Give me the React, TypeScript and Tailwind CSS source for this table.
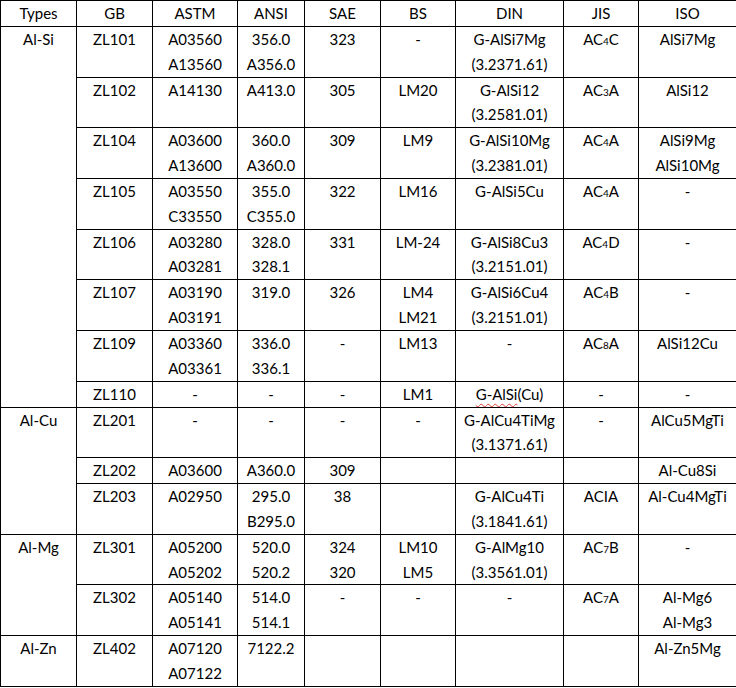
import type { ReactNode } from "react";

type Row = {
  gb: string;
  astm: ReactNode;
  ansi: ReactNode;
  sae: ReactNode;
  bs: ReactNode;
  din: ReactNode;
  jis: ReactNode;
  iso: ReactNode;
};

type Group = { type: string; rows: Row[] };

const two = (a: string, b: string) => (
  <>
    {a}
    <br />
    {b}
  </>
);

const ac = (n: string, suffix: string) => (
  <>
    AC<span className="text-[10px]">{n}</span>
    {suffix}
  </>
);

const groups: Group[] = [
  {
    type: "Al-Si",
    rows: [
      { gb: "ZL101", astm: two("A03560", "A13560"), ansi: two("356.0", "A356.0"), sae: "323", bs: "-", din: two("G-AlSi7Mg", "(3.2371.61)"), jis: ac("4", "C"), iso: "AlSi7Mg" },
      { gb: "ZL102", astm: "A14130", ansi: "A413.0", sae: "305", bs: "LM20", din: two("G-AlSi12", "(3.2581.01)"), jis: ac("3", "A"), iso: "AlSi12" },
      { gb: "ZL104", astm: two("A03600", "A13600"), ansi: two("360.0", "A360.0"), sae: "309", bs: "LM9", din: two("G-AlSi10Mg", "(3.2381.01)"), jis: ac("4", "A"), iso: two("AlSi9Mg", "AlSi10Mg") },
      { gb: "ZL105", astm: two("A03550", "C33550"), ansi: two("355.0", "C355.0"), sae: "322", bs: "LM16", din: "G-AlSi5Cu", jis: ac("4", "A"), iso: "-" },
      { gb: "ZL106", astm: two("A03280", "A03281"), ansi: two("328.0", "328.1"), sae: "331", bs: "LM-24", din: two("G-AlSi8Cu3", "(3.2151.01)"), jis: ac("4", "D"), iso: "-" },
      { gb: "ZL107", astm: two("A03190", "A03191"), ansi: "319.0", sae: "326", bs: two("LM4", "LM21"), din: two("G-AlSi6Cu4", "(3.2151.01)"), jis: ac("4", "B"), iso: "-" },
      { gb: "ZL109", astm: two("A03360", "A03361"), ansi: two("336.0", "336.1"), sae: "-", bs: "LM13", din: "-", jis: ac("8", "A"), iso: "AlSi12Cu" },
      {
        gb: "ZL110",
        astm: "-",
        ansi: "-",
        sae: "-",
        bs: "LM1",
        din: (
          <>
            <span className="underline decoration-wavy decoration-[#e0403a] decoration-1 underline-offset-[3px]">G-AlSi</span>(Cu)
          </>
        ),
        jis: "-",
        iso: "-",
      },
    ],
  },
  {
    type: "Al-Cu",
    rows: [
      { gb: "ZL201", astm: "-", ansi: "-", sae: "-", bs: "-", din: two("G-AlCu4TiMg", "(3.1371.61)"), jis: "-", iso: "AlCu5MgTi" },
      { gb: "ZL202", astm: "A03600", ansi: "A360.0", sae: "309", bs: "", din: "", jis: "", iso: "Al-Cu8Si" },
      { gb: "ZL203", astm: "A02950", ansi: two("295.0", "B295.0"), sae: "38", bs: "", din: two("G-AlCu4Ti", "(3.1841.61)"), jis: "ACIA", iso: "Al-Cu4MgTi" },
    ],
  },
  {
    type: "Al-Mg",
    rows: [
      { gb: "ZL301", astm: two("A05200", "A05202"), ansi: two("520.0", "520.2"), sae: two("324", "320"), bs: two("LM10", "LM5"), din: two("G-AlMg10", "(3.3561.01)"), jis: ac("7", "B"), iso: "-" },
      { gb: "ZL302", astm: two("A05140", "A05141"), ansi: two("514.0", "514.1"), sae: "-", bs: "-", din: "-", jis: ac("7", "A"), iso: two("Al-Mg6", "Al-Mg3") },
    ],
  },
  {
    type: "Al-Zn",
    rows: [
      { gb: "ZL402", astm: two("A07120", "A07122"), ansi: "7122.2", sae: "", bs: "", din: "", jis: "", iso: "Al-Zn5Mg" },
    ],
  },
];

const headers = ["Types", "GB", "ASTM", "ANSI", "SAE", "BS", "DIN", "JIS", "ISO"];
const widths = ["w-[76px]", "w-[76px]", "w-[85px]", "w-[67px]", "w-[76px]", "w-[75px]", "w-[108px]", "w-[75px]", "w-[98px]"];

const cell = "border border-black p-0 align-top text-center";

export default function App() {
  return (
    <div className="bg-white w-[736px] font-['Lato',sans-serif] text-[15px] leading-[24.85px] text-black">
      <table className="w-[736px] table-fixed border-collapse">
        <colgroup>
          {widths.map((w, i) => (
            <col key={i} className={w} />
          ))}
        </colgroup>
        <thead>
          <tr>
            {headers.map((h) => (
              <th key={h} className={`${cell} font-normal`}>
                {h}
              </th>
            ))}
          </tr>
        </thead>
        <tbody>
          {groups.map((g) =>
            g.rows.map((r, i) => (
              <tr key={r.gb}>
                {i === 0 && (
                  <td rowSpan={g.rows.length} className={cell}>
                    {g.type}
                  </td>
                )}
                <td className={cell}>{r.gb}</td>
                <td className={cell}>{r.astm}</td>
                <td className={cell}>{r.ansi}</td>
                <td className={cell}>{r.sae}</td>
                <td className={cell}>{r.bs}</td>
                <td className={cell}>{r.din}</td>
                <td className={cell}>{r.jis}</td>
                <td className={cell}>{r.iso}</td>
              </tr>
            ))
          )}
        </tbody>
      </table>
    </div>
  );
}
